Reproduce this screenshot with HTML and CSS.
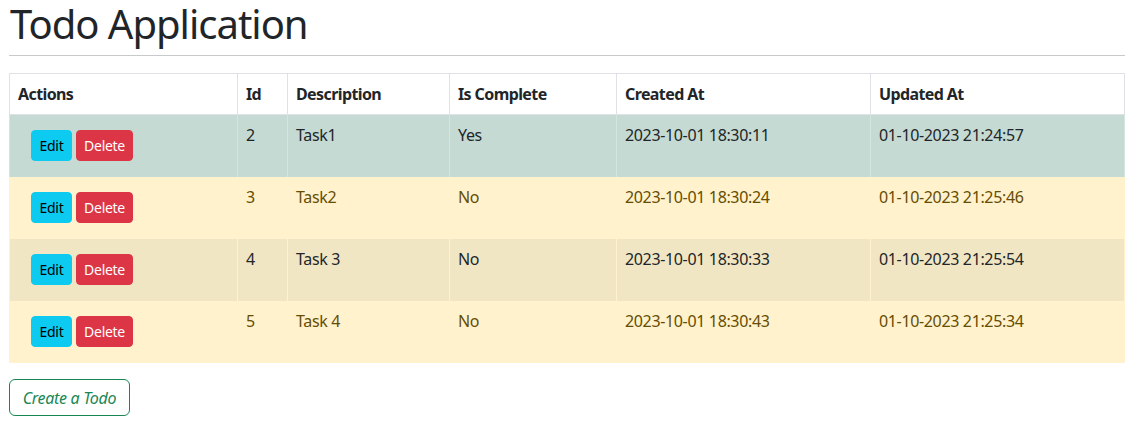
FILE: index.html
```html
<!DOCTYPE html>
<html lang="en">
<head>
<meta charset="utf-8">
<title>Todo Application</title>
<link rel="stylesheet" href="styles.css">
</head>
<body>
<div class="page">
  <h1 class="title">Todo Application</h1>
  <hr class="rule">
  <table class="todos">
    <thead>
      <tr>
        <th class="c-actions">Actions</th>
        <th class="c-id">Id</th>
        <th class="c-desc">Description</th>
        <th class="c-done">Is Complete</th>
        <th class="c-created">Created At</th>
        <th class="c-updated">Updated At</th>
      </tr>
    </thead>
    <tbody>
      <tr class="row-success striped">
        <td><div class="actions"><button class="btn btn-edit">Edit</button><button class="btn btn-delete">Delete</button></div></td>
        <td>2</td><td>Task1</td><td>Yes</td><td>2023-10-01 18:30:11</td><td>01-10-2023 21:24:57</td>
      </tr>
      <tr class="row-warning">
        <td><div class="actions"><button class="btn btn-edit">Edit</button><button class="btn btn-delete">Delete</button></div></td>
        <td>3</td><td>Task2</td><td>No</td><td>2023-10-01 18:30:24</td><td>01-10-2023 21:25:46</td>
      </tr>
      <tr class="row-warning striped">
        <td><div class="actions"><button class="btn btn-edit">Edit</button><button class="btn btn-delete">Delete</button></div></td>
        <td>4</td><td>Task 3</td><td>No</td><td>2023-10-01 18:30:33</td><td>01-10-2023 21:25:54</td>
      </tr>
      <tr class="row-warning">
        <td><div class="actions"><button class="btn btn-edit">Edit</button><button class="btn btn-delete">Delete</button></div></td>
        <td>5</td><td>Task 4</td><td>No</td><td>2023-10-01 18:30:43</td><td>01-10-2023 21:25:34</td>
      </tr>
    </tbody>
  </table>
  <button class="btn-create">Create a Todo</button>
</div>
</body>
</html>
```

FILE: styles.css
```css
* { box-sizing: border-box; }
html, body { margin: 0; padding: 0; background: #fff; }
body {
  font-family: "Noto Sans", "Open Sans", sans-serif;
  font-size: 16px;
  line-height: 1.5;
  color: #212529;
}
.page {
  padding: 0 22px 0 9px;
}
.title {
  font-size: 40px;
  font-weight: 400;
  line-height: 48px;
  letter-spacing: -1px;
  margin: 0 0 7px 1px;
}
.rule {
  border: 0;
  border-top: 1px solid #c8c9ca;
  margin: 0 0 17px;
  height: 0;
}
.todos {
  width: 100%;
  border-collapse: collapse;
  margin-bottom: 16px;
}
.todos th, .todos td {
  text-align: left;
  vertical-align: top;
  padding: 8px;
  border: 1px solid #dee2e6;
  letter-spacing: -0.35px;
}
.todos th { font-weight: 700; background: #fff; letter-spacing: -0.6px; }
.todos tbody tr td { border-top: 0; border-bottom: 0; }
.c-actions { width: 228px; }
.c-id { width: 50px; }
.c-desc { width: 162px; }
.c-done { width: 167px; }
.c-created { width: 254px; }
.row-success td { background: #c5dad2; border-color: #d3e6de; color: #212529; }
.row-warning td { background: #fff2cc; border-color: #fff2cc; color: #664d03; }
.row-warning.striped td { background: #f1e6c3; border-color: #fff2cc; color: #212529; }
.actions {
  display: flex;
  gap: 4px;
  padding: 7px 0 8px 13px;
}
.btn {
  font-family: inherit;
  font-size: 14px;
  line-height: 21px;
  letter-spacing: -0.3px;
  padding: 4px 7px;
  border: 1px solid transparent;
  border-radius: 4px;
  cursor: pointer;
}
.btn-edit { background: #0dcaf0; border-color: #0dcaf0; color: #000; width: 41px; }
.btn-delete { background: #dc3545; border-color: #dc3545; color: #fff; width: 57px; }
.btn-create {
  font-family: inherit;
  font-size: 16px;
  font-style: italic;
  line-height: 24px;
  letter-spacing: -0.3px;
  padding: 6px 12px;
  height: 37px;
  width: 121px;
  background: #fff;
  color: #198754;
  border: 1px solid #198754;
  border-radius: 6px;
}
```
